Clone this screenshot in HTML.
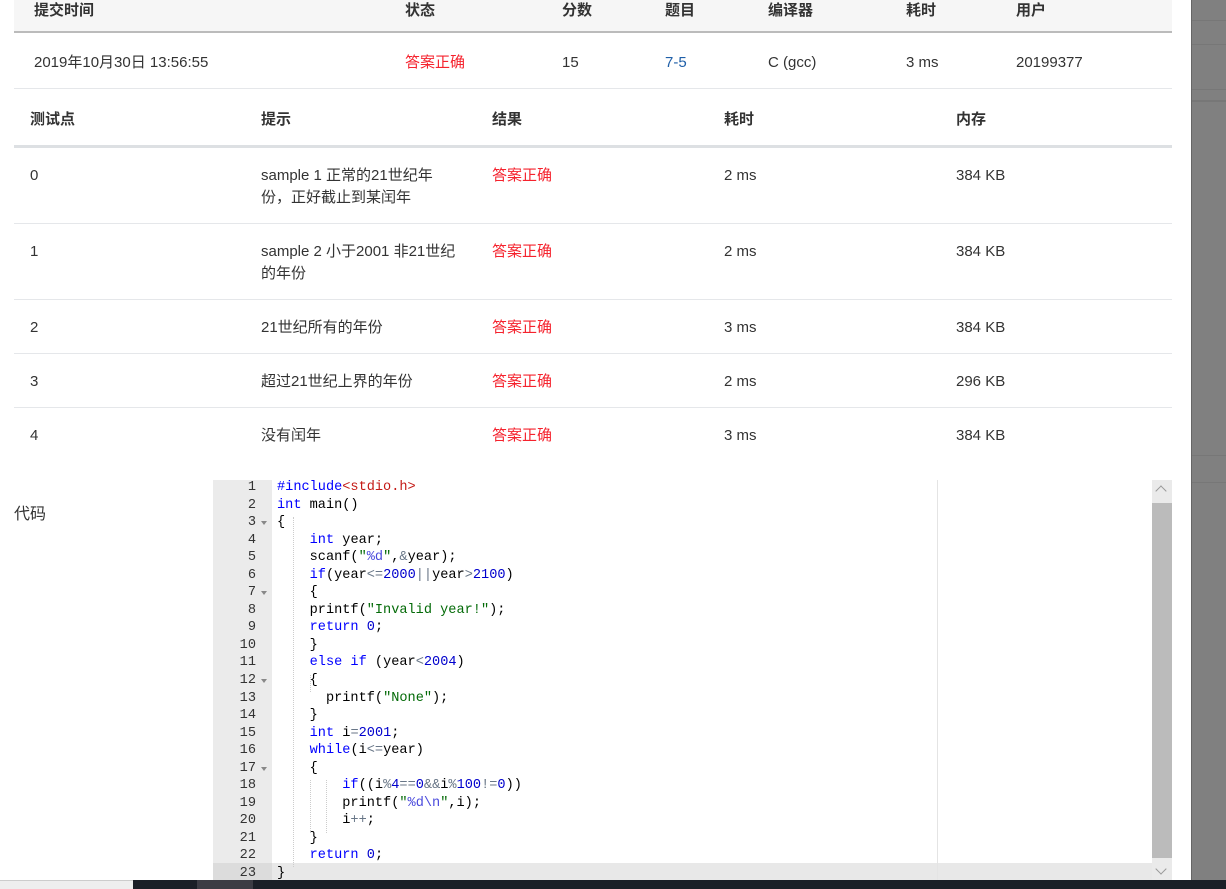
<!DOCTYPE html>
<html><head><meta charset="utf-8"><style>
*{margin:0;padding:0;box-sizing:border-box}
body{width:1226px;height:889px;overflow:hidden;background:#fff;position:relative;font-family:"Liberation Sans","Noto Sans CJK SC",sans-serif;font-size:15px;color:#333}
.a{position:absolute;white-space:nowrap;line-height:22px}
.b{font-weight:bold}
.r{color:#f5222d}
.hl{position:absolute;left:14px;width:1158px}
.code{position:absolute;left:213px;top:480px;width:959px;height:400px;font-family:"Liberation Mono",monospace;font-size:13.6px;overflow:hidden}
.gut{position:absolute;left:0;top:0;width:59px;height:400px;background:#ebebeb}
.ln{position:absolute;left:0;width:43px;text-align:right;color:#333;line-height:17.55px}
.cl{position:absolute;left:64px;line-height:17.55px;white-space:pre;color:#000}
.k{color:#0000ff}.n{color:#0000cd}.s{color:#036a07}.f{color:#4a4adc}.o{color:#687687}.inc{color:#c41a16}
.fold{position:absolute;left:48px;width:0;height:0;border-left:3px solid transparent;border-right:3px solid transparent;border-top:4px solid #888}
.ig{position:absolute;width:0;border-left:1px dotted #ccc}
</style></head><body>
<div class="hl" style="top:0;height:33px;background:#f6f6f6;border-bottom:2px solid #bbb"></div>
<div class="a b" style="left:34px;top:0px">提交时间</div>
<div class="a b" style="left:405px;top:0px">状态</div>
<div class="a b" style="left:562px;top:0px">分数</div>
<div class="a b" style="left:665px;top:0px">题目</div>
<div class="a b" style="left:768px;top:0px">编译器</div>
<div class="a b" style="left:906px;top:0px">耗时</div>
<div class="a b" style="left:1016px;top:0px">用户</div>
<div class="a" style="left:34px;top:52px">2019年10月30日 13:56:55</div>
<div class="a r" style="left:405px;top:52px">答案正确</div>
<div class="a" style="left:562px;top:52px">15</div>
<div class="a" style="left:665px;top:52px;color:#1f5fa8">7-5</div>
<div class="a" style="left:768px;top:52px">C (gcc)</div>
<div class="a" style="left:906px;top:52px">3 ms</div>
<div class="a" style="left:1016px;top:52px">20199377</div>
<div class="hl" style="top:88px;height:1px;background:#e5e7ea"></div>
<div class="a b" style="left:30px;top:109px">测试点</div>
<div class="a b" style="left:261px;top:109px">提示</div>
<div class="a b" style="left:492px;top:109px">结果</div>
<div class="a b" style="left:724px;top:109px">耗时</div>
<div class="a b" style="left:956px;top:109px">内存</div>
<div class="hl" style="top:145px;height:3px;background:#dde0e3"></div>

<div class="a" style="left:30px;top:165px">0</div>
<div class="a" style="left:261px;top:165px">sample 1 正常的21世纪年<br>份，正好截止到某闰年</div>
<div class="a r" style="left:492px;top:165px">答案正确</div>
<div class="a" style="left:724px;top:165px">2 ms</div>
<div class="a" style="left:956px;top:165px">384 KB</div>
<div class="hl" style="top:223px;height:1px;background:#e5e7ea"></div>

<div class="a" style="left:30px;top:241px">1</div>
<div class="a" style="left:261px;top:241px">sample 2 小于2001 非21世纪<br>的年份</div>
<div class="a r" style="left:492px;top:241px">答案正确</div>
<div class="a" style="left:724px;top:241px">2 ms</div>
<div class="a" style="left:956px;top:241px">384 KB</div>
<div class="hl" style="top:299px;height:1px;background:#e5e7ea"></div>

<div class="a" style="left:30px;top:317px">2</div>
<div class="a" style="left:261px;top:317px">21世纪所有的年份</div>
<div class="a r" style="left:492px;top:317px">答案正确</div>
<div class="a" style="left:724px;top:317px">3 ms</div>
<div class="a" style="left:956px;top:317px">384 KB</div>
<div class="hl" style="top:353px;height:1px;background:#e5e7ea"></div>

<div class="a" style="left:30px;top:371px">3</div>
<div class="a" style="left:261px;top:371px">超过21世纪上界的年份</div>
<div class="a r" style="left:492px;top:371px">答案正确</div>
<div class="a" style="left:724px;top:371px">2 ms</div>
<div class="a" style="left:956px;top:371px">296 KB</div>
<div class="hl" style="top:407px;height:1px;background:#e5e7ea"></div>

<div class="a" style="left:30px;top:425px">4</div>
<div class="a" style="left:261px;top:425px">没有闰年</div>
<div class="a r" style="left:492px;top:425px">答案正确</div>
<div class="a" style="left:724px;top:425px">3 ms</div>
<div class="a" style="left:956px;top:425px">384 KB</div>

<div class="a" style="left:14px;top:504px;font-size:16px">代码</div>

<div class="code">
<div class="gut"></div>
<div style="position:absolute;left:0;top:383px;width:939px;height:17px;background:#e8e8e8"></div>
<div style="position:absolute;left:0;top:383px;width:59px;height:17px;background:#dcdcdc"></div>
<div style="position:absolute;left:724px;top:0;width:1px;height:400px;background:#e4e4e4"></div>
<div style="position:absolute;left:939px;top:0;width:20px;height:400px;background:#eaeaea"></div>
<div style="position:absolute;left:939px;top:23px;width:20px;height:355px;background:#bbb"></div>
<div style="position:absolute;left:944px;top:7px;width:8px;height:8px;border-left:1px solid #999;border-top:1px solid #999;transform:rotate(45deg)"></div>
<div style="position:absolute;left:944px;top:385px;width:8px;height:8px;border-right:1px solid #999;border-bottom:1px solid #999;transform:rotate(45deg)"></div>
<div class="ig" style="left:80px;top:37px;height:350px"></div>
<div class="ig" style="left:97px;top:195px;height:17px"></div>
<div class="ig" style="left:97px;top:300px;height:53px"></div>
<div class="ig" style="left:113px;top:300px;height:53px"></div>
<div class="fold" style="top:41px"></div>
<div class="fold" style="top:111px"></div>
<div class="fold" style="top:199px"></div>
<div class="fold" style="top:287px"></div>
<div class="ln" style="top:-1px">1<br>2<br>3<br>4<br>5<br>6<br>7<br>8<br>9<br>10<br>11<br>12<br>13<br>14<br>15<br>16<br>17<br>18<br>19<br>20<br>21<br>22<br>23</div>
<div class="cl" style="top:-1px"><span class="k">#include</span><span class="inc">&lt;stdio.h&gt;</span>
<span class="k">int</span> main()
{
    <span class="k">int</span> year;
    scanf(<span class="s">"</span><span class="f">%d</span><span class="s">"</span>,<span class="o">&amp;</span>year);
    <span class="k">if</span>(year<span class="o">&lt;=</span><span class="n">2000</span><span class="o">||</span>year<span class="o">&gt;</span><span class="n">2100</span>)
    {
    printf(<span class="s">"Invalid year!"</span>);
    <span class="k">return</span> <span class="n">0</span>;
    }
    <span class="k">else if</span> (year<span class="o">&lt;</span><span class="n">2004</span>)
    {
      printf(<span class="s">"None"</span>);
    }
    <span class="k">int</span> i<span class="o">=</span><span class="n">2001</span>;
    <span class="k">while</span>(i<span class="o">&lt;=</span>year)
    {
        <span class="k">if</span>((i<span class="o">%</span><span class="n">4</span><span class="o">==</span><span class="n">0</span><span class="o">&amp;&amp;</span>i<span class="o">%</span><span class="n">100</span><span class="o">!=</span><span class="n">0</span>))
        printf(<span class="s">"</span><span class="f">%d\n</span><span class="s">"</span>,i);
        i<span class="o">++</span>;
    }
    <span class="k">return</span> <span class="n">0</span>;
}</div>
</div>

<div style="position:absolute;left:1191px;top:0;width:1px;height:880px;background:#666"></div>
<div style="position:absolute;left:1192px;top:0;width:34px;height:880px;background:#808080"></div>
<div style="position:absolute;left:1192px;top:20px;width:34px;height:1px;background:#777"></div>
<div style="position:absolute;left:1192px;top:44px;width:34px;height:1px;background:#777"></div>
<div style="position:absolute;left:1192px;top:89px;width:34px;height:1px;background:#777"></div>
<div style="position:absolute;left:1192px;top:100px;width:34px;height:2px;background:#777"></div>
<div style="position:absolute;left:1192px;top:455px;width:34px;height:1px;background:#777"></div>
<div style="position:absolute;left:1192px;top:482px;width:34px;height:1px;background:#777"></div>
<div style="position:absolute;left:0;top:880px;width:133px;height:9px;background:#eee;border-top:1px solid #ccc"></div>
<div style="position:absolute;left:133px;top:880px;width:1093px;height:9px;background:#1b1f27"></div>
<div style="position:absolute;left:197px;top:880px;width:56px;height:9px;background:#3c3c44"></div>
</body></html>
